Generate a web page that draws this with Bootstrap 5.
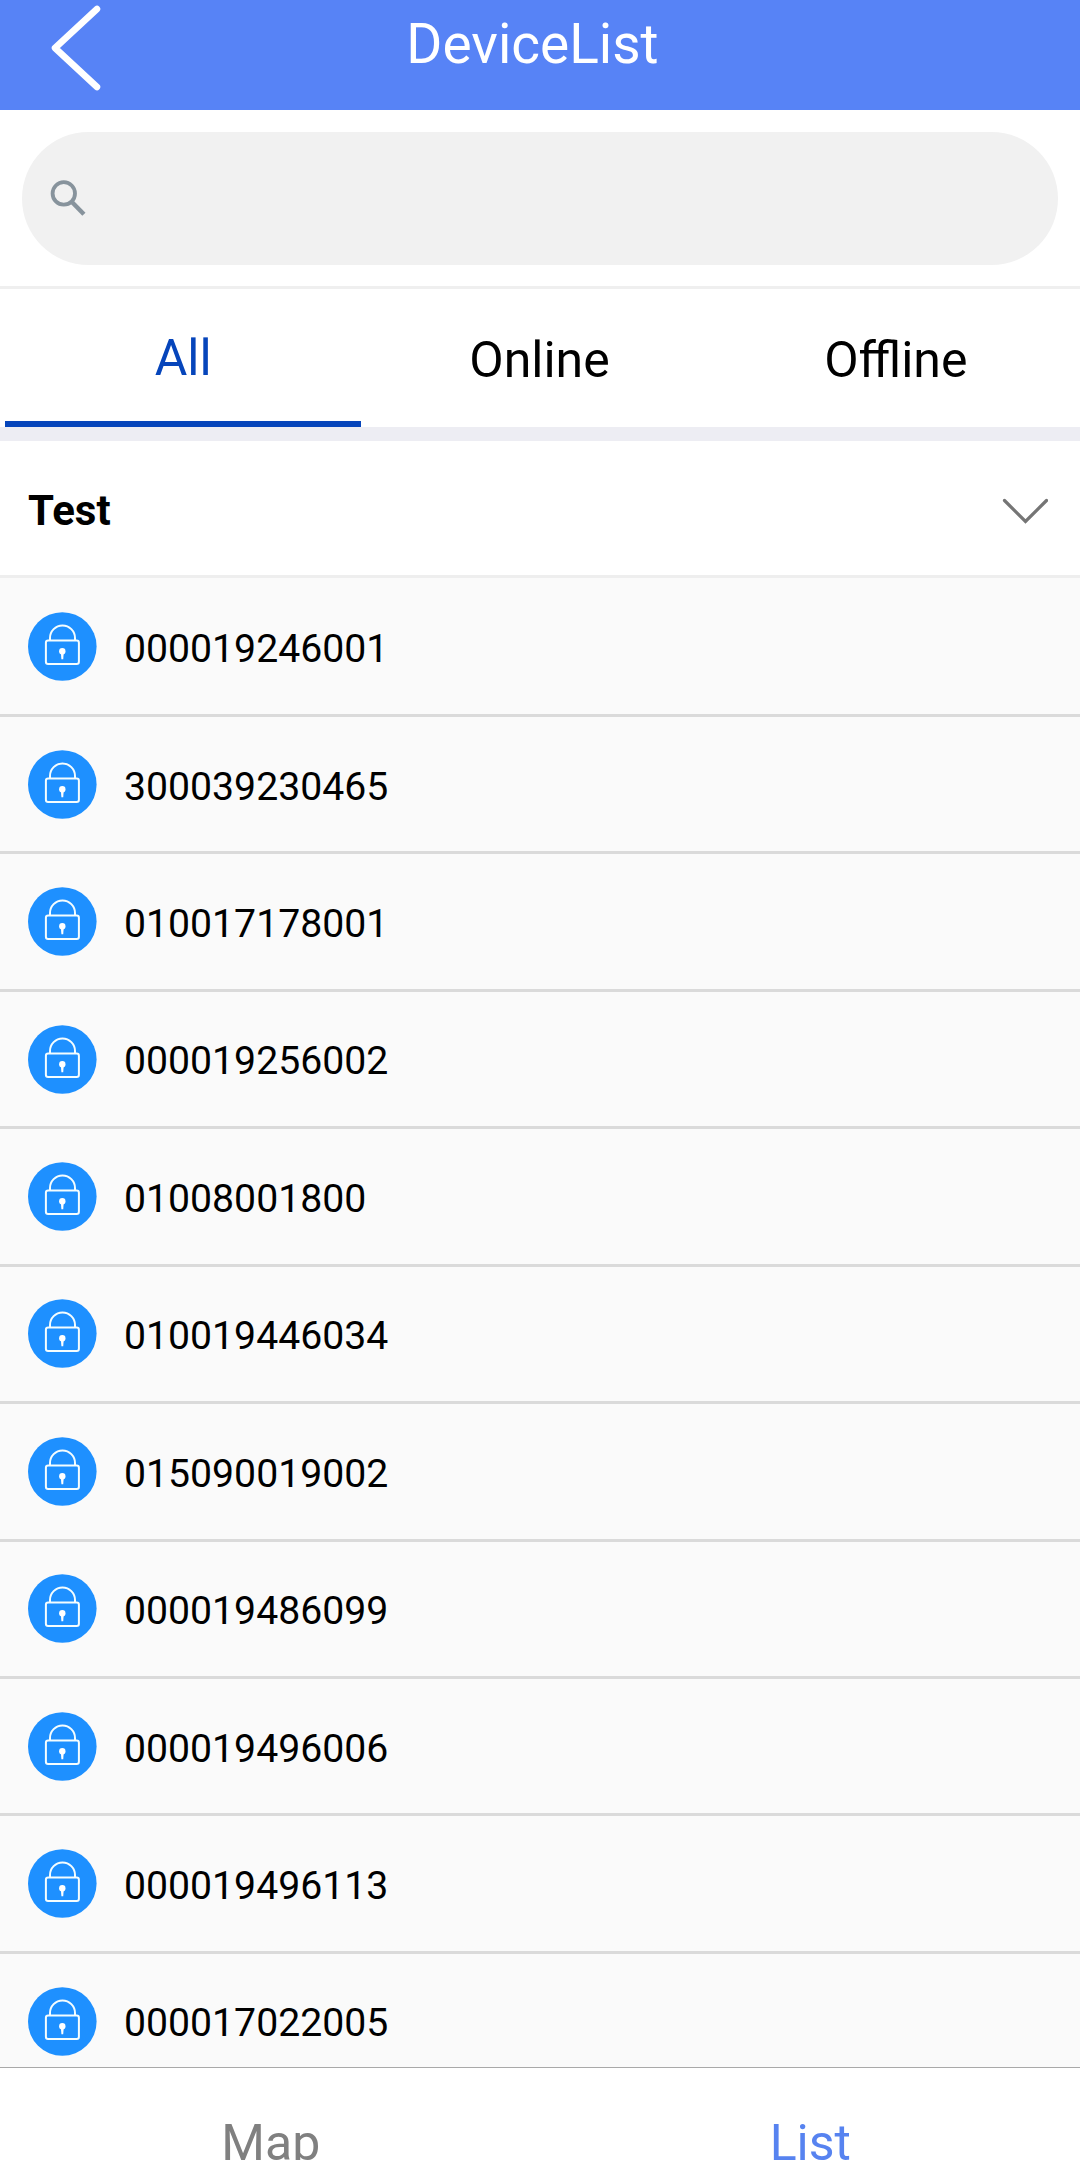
<!DOCTYPE html>
<html lang="en">
<head>
<meta charset="utf-8">
<meta name="viewport" content="width=device-width, initial-scale=1">
<title>DeviceList</title>
<link href="https://cdn.jsdelivr.net/npm/bootstrap@5.3.0/dist/css/bootstrap.min.css" rel="stylesheet">
<style>
  body { font-family: Roboto, "Noto Sans", sans-serif; color: #000; line-height: 1; }
  .app { height: 2160px; }
  .app-bar { height: 110px; background: #5783f6; padding-left: 45px; padding-right: 120px; }
  .app-bar svg { width: 60px; height: 96px; }
  .app-title { font-size: 55px; line-height: 88px; }
  .search-area { height: 179px; padding: 22px 22px 21px; border-bottom: 3px solid #efefef; }
  .search-box { height: 133px; background: #f1f1f1; padding-left: 25.5px; }
  .search-box svg { margin-top: -1px; }
  .search-box input, .search-box input:focus { background: transparent; box-shadow: none; font-size: 40px; }
  .tabs { height: 138px; padding: 0 6px 0 5px; }
  .tabs .nav-link { color: #000; padding: 3px 0 0; font-size: 50px; border-radius: 0; }
  .tabs .nav-link.active { color: #0645bb; padding-top: 6px; border-bottom: 6px solid #0645bb; }
  .spacer { height: 14px; background: #ededf3; }
  .group-head { height: 137px; padding: 6px 32px 0 28px; border-bottom: 3px solid #eee; font-size: 42px; }
  .devices { background: #fafafa; padding-top: 1.5px; min-height: 0; }
  .device { height: 137.45px; border-bottom: 3px solid #dadada; padding-left: 28px; font-size: 39.2px; }
  .device svg { width: 69px; height: 69px; }
  .device span { padding-top: 6px; margin-left: 27px; }
  .bottom-bar { height: 93px; border-top: 1px solid #a9a9a9; font-size: 50px; line-height: 150px; color: #808080; padding-left: 1px; }
  .bottom-bar .current { color: #5783f0; }
</style>
</head>
<body>
<svg class="d-none">
  <symbol id="lock" viewBox="0 0 69 69">
    <circle cx="34.3" cy="34.5" r="34.3" fill="#1e90ff"/>
    <g fill="none" stroke="#f4fdff" stroke-width="2">
      <rect x="17.9" y="28.5" width="33" height="23.4" rx="2.2"/>
      <path d="M22 28.2V26a12.5 12.5 0 0 1 25 0v2.2"/>
    </g>
    <circle cx="34.3" cy="39.3" r="3.2" fill="#fff"/>
    <path d="M32.9 41h2.8l-.5 6.2h-1.8z" fill="#fff"/>
  </symbol>
</svg>
<div class="app d-flex flex-column overflow-hidden bg-white">
  <header class="app-bar d-flex align-items-start text-white flex-shrink-0">
    <svg viewBox="0 0 60 96" fill="none" stroke="#fff" stroke-width="6.5" stroke-linecap="round" stroke-linejoin="round"><path d="M52 9 10 48l42 39"/></svg>
    <div class="app-title flex-fill text-center">DeviceList</div>
  </header>
  <div class="search-area flex-shrink-0">
    <div class="search-box d-flex align-items-center rounded-pill">
      <svg width="44" height="44" viewBox="0 0 44 44" fill="none" stroke="#87939c"><circle cx="16.5" cy="17.2" r="11.7" stroke-width="4"/><path d="m25.5 26.7 12 12.3" stroke-width="4.6"/></svg>
      <input class="form-control border-0" type="text" aria-label="Search">
    </div>
  </div>
  <nav class="tabs nav nav-fill flex-nowrap flex-shrink-0">
    <a class="nav-link active w-100 d-flex align-items-center justify-content-center" href="#">All</a>
    <a class="nav-link w-100 d-flex align-items-center justify-content-center" href="#">Online</a>
    <a class="nav-link w-100 d-flex align-items-center justify-content-center" href="#">Offline</a>
  </nav>
  <div class="spacer flex-shrink-0"></div>
  <div class="group-head d-flex align-items-center justify-content-between fw-bold flex-shrink-0">
    <span>Test</span>
    <svg width="46" height="26" viewBox="0 0 46 26" fill="none" stroke="#757575" stroke-width="3.2" stroke-linecap="round"><path d="M2.5 2.5 23.5 23.5 44.5 2.5"/></svg>
  </div>
  <main class="devices flex-fill overflow-hidden">
    <div class="device d-flex align-items-center"><svg><use href="#lock"/></svg><span>000019246001</span></div>
    <div class="device d-flex align-items-center"><svg><use href="#lock"/></svg><span>300039230465</span></div>
    <div class="device d-flex align-items-center"><svg><use href="#lock"/></svg><span>010017178001</span></div>
    <div class="device d-flex align-items-center"><svg><use href="#lock"/></svg><span>000019256002</span></div>
    <div class="device d-flex align-items-center"><svg><use href="#lock"/></svg><span>01008001800</span></div>
    <div class="device d-flex align-items-center"><svg><use href="#lock"/></svg><span>010019446034</span></div>
    <div class="device d-flex align-items-center"><svg><use href="#lock"/></svg><span>015090019002</span></div>
    <div class="device d-flex align-items-center"><svg><use href="#lock"/></svg><span>000019486099</span></div>
    <div class="device d-flex align-items-center"><svg><use href="#lock"/></svg><span>000019496006</span></div>
    <div class="device d-flex align-items-center"><svg><use href="#lock"/></svg><span>000019496113</span></div>
    <div class="device d-flex align-items-center"><svg><use href="#lock"/></svg><span>000017022005</span></div>
  </main>
  <footer class="bottom-bar d-flex text-center overflow-hidden flex-shrink-0 bg-white">
    <div class="w-50">Map</div>
    <div class="w-50 current">List</div>
  </footer>
</div>
<script src="https://cdn.jsdelivr.net/npm/bootstrap@5.3.0/dist/js/bootstrap.bundle.min.js"></script>
</body>
</html>
